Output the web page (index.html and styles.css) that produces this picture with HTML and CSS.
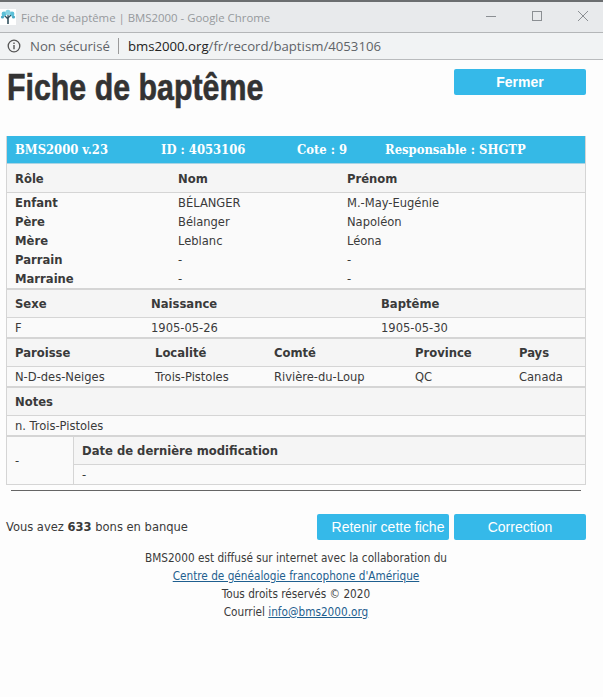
FILE: index.html
```html
<!DOCTYPE html>
<html lang="fr">
<head>
<meta charset="utf-8">
<title>Fiche de baptême | BMS2000</title>
<link rel="stylesheet" href="styles.css">
</head>
<body>
<header class="titlebar">
  <svg class="favicon" width="16" height="16" viewBox="0 0 16 16"><rect width="16" height="16" fill="#fff"/><path d="M8 15V8M8 10L4 6M8 9l4-4M8 8V3" stroke="#33505f" stroke-width="1.2" fill="none"/><circle cx="4" cy="5" r="2.4" fill="#5cc0d8"/><circle cx="12" cy="5" r="2.4" fill="#5cc0d8"/><circle cx="8" cy="3.4" r="2.6" fill="#86d3e4"/><circle cx="2.5" cy="8" r="1.6" fill="#4aa9c4"/><circle cx="13.5" cy="8" r="1.6" fill="#4aa9c4"/><path d="M8 15V8M8 10L5 7M8 9l3-3" stroke="#33505f" stroke-width="1" fill="none"/></svg>
  <span class="window-title">Fiche de baptême | BMS2000 - Google Chrome</span>
  <span class="window-controls">
    <svg width="12" height="12" viewBox="0 0 12 12"><path d="M1 6.5h10" stroke="#8b8f93" fill="none"/></svg>
    <svg width="12" height="12" viewBox="0 0 12 12"><rect x="1.5" y="1.5" width="9" height="9" stroke="#8b8f93" fill="none"/></svg>
    <svg width="12" height="12" viewBox="0 0 12 12"><path d="M1 1l10 10M11 1L1 11" stroke="#8b8f93" fill="none"/></svg>
  </span>
</header>
<div class="addressbar">
  <svg class="info" width="14" height="14" viewBox="0 0 14 14"><circle cx="7" cy="7" r="5.8" stroke="#555" stroke-width="1.3" fill="none"/><path d="M7 6v4.2" stroke="#555" stroke-width="1.4"/><path d="M7 3.4v1.5" stroke="#555" stroke-width="1.4"/></svg>
  <span class="insecure">Non sécurisé</span>
  <span class="url"><b>bms2000.org</b>/fr/record/baptism/4053106</span>
</div>
<main class="page">
  <div class="top">
    <h1>Fiche de baptême</h1>
    <a class="btn btn-bold">Fermer</a>
  </div>
  <section class="record">
    <div class="band">
      <span class="b1">BMS2000 v.23</span><span class="b2">ID : 4053106</span><span class="b3">Cote : 9</span><span>Responsable : SHGTP</span>
    </div>
    <div class="block">
      <div class="row head head-first cols-role"><span>Rôle</span><span>Nom</span><span>Prénom</span></div>
      <div class="people cols-role">
        <strong>Enfant</strong><span>BÉLANGER</span><span>M.-May-Eugénie</span>
        <strong>Père</strong><span>Bélanger</span><span>Napoléon</span>
        <strong>Mère</strong><span>Leblanc</span><span>Léona</span>
        <strong>Parrain</strong><span>-</span><span>-</span>
        <strong>Marraine</strong><span>-</span><span>-</span>
      </div>
    </div>
    <div class="block">
      <div class="row head cols-birth"><span>Sexe</span><span>Naissance</span><span>Baptême</span></div>
      <div class="row data cols-birth"><span>F</span><span>1905-05-26</span><span>1905-05-30</span></div>
    </div>
    <div class="block">
      <div class="row head cols-place"><span>Paroisse</span><span>Localité</span><span>Comté</span><span>Province</span><span>Pays</span></div>
      <div class="row data cols-place"><span>N-D-des-Neiges</span><span>Trois-Pistoles</span><span>Rivière-du-Loup</span><span>QC</span><span>Canada</span></div>
    </div>
    <div class="block">
      <div class="row head"><span>Notes</span></div>
      <div class="row data"><span>n. Trois-Pistoles</span></div>
    </div>
    <div class="block split">
      <div class="side">-</div>
      <div class="split-main">
        <div class="row head"><span>Date de dernière modification</span></div>
        <div class="row data"><span>-</span></div>
      </div>
    </div>
  </section>
  <hr class="rule">
  <div class="actions">
    <p class="credits">Vous avez <strong>633</strong> bons en banque</p>
    <a class="btn btn-offset">Retenir cette fiche</a>
    <a class="btn">Correction</a>
  </div>
  <footer class="foot">
    <div>BMS2000 est diffusé sur internet avec la collaboration du</div>
    <div><a href="#">Centre de généalogie francophone d'Amérique</a></div>
    <div>Tous droits réservés © 2020</div>
    <div>Courriel <a href="#">info@bms2000.org</a></div>
  </footer>
</main>
</body>
</html>
```
FILE: styles.css
```css
* { box-sizing: border-box; }
html, body { margin: 0; padding: 0; }
body {
  width: 603px;
  height: 697px;
  overflow: hidden;
  background: #fdfdfd;
  color: #3a3a3a;
  font-family: "DejaVu Sans Condensed", "DejaVu Sans", sans-serif;
  font-size: 12.8px;
}
.titlebar {
  height: 33px;
  display: flex;
  align-items: center;
  background: #e8eaec;
  border-top: 2px solid #6b6e70;
  border-bottom: 1px solid #b4b6b8;
}
.favicon { margin-right: 5px; }
.window-title {
  font-family: "Open Sans", sans-serif;
  font-size: 11.4px;
  color: #96999c;
}
.window-controls {
  margin-left: auto;
  display: flex;
  gap: 34px;
  padding-right: 14px;
  margin-bottom: 2px;
}
.addressbar {
  height: 27px;
  display: flex;
  align-items: center;
  background: #f1f3f4;
  border-bottom: 1px solid #b9bbbd;
  font-family: "Open Sans", sans-serif;
  font-size: 13.2px;
  color: #5f6368;
}
.info { margin: 0 9px 0 7px; }
.insecure { padding-right: 8px; border-right: 1px solid #9a9a9a; line-height: 16px; }
.url { padding-left: 9px; }
.url b { font-weight: 400; color: #222; }
.page { padding: 0 17px 0 6px; }
.top {
  height: 76px;
  display: flex;
  justify-content: space-between;
  align-items: flex-start;
}
h1 {
  margin: 6px 0 0 1px;
  font-family: "Liberation Sans", sans-serif;
  font-size: 37px;
  line-height: 44px;
  font-weight: 700;
  color: #333;
  white-space: nowrap;
  transform: scaleX(.82);
  transform-origin: left center;
  -webkit-text-stroke: .6px #333;
}
.btn {
  display: flex;
  align-items: center;
  justify-content: center;
  width: 132px;
  height: 26px;
  background: #35b9e9;
  border-radius: 2px;
  color: #fff;
  font-family: "Liberation Sans", sans-serif;
  font-size: 14px;
  white-space: nowrap;
}
.btn-bold { font-weight: 700; margin-top: 9px; }
.btn-offset { padding-left: 10px; }
.record {
  width: 580px;
  border: 1px solid #d5d5d5;
  border-top: 0;
  background: #fafafa;
}
.band {
  height: 28px;
  display: flex;
  align-items: center;
  padding-left: 8px;
  background: #35b9e6;
  border-bottom: 1px solid #a9d4e4;
  color: #fff;
  font-family: "DejaVu Serif Condensed", "DejaVu Serif", serif;
  font-weight: 700;
  font-size: 12.9px;
  white-space: nowrap;
}
.band .b1 { width: 146px; }
.band .b2 { width: 136px; }
.band .b3 { width: 88px; }
.block { border-bottom: 2px solid #d5d5d5; }
.block:last-child { border-bottom: 0; }
.row {
  display: grid;
  align-items: center;
  padding-left: 8px;
  white-space: nowrap;
}
.head {
  height: 28px;
  font-weight: 700;
  font-size: 12.9px;
  background: #f5f5f5;
  border-bottom: 1px solid #d5d5d5;
}
.head-first { height: 29px; padding-top: 1px; }
.data { height: 19px; }
.cols-role { grid-template-columns: 163px 169px 1fr; }
.cols-birth { grid-template-columns: 136px 230px 1fr; }
.cols-place { grid-template-columns: 140px 119px 141px 104px 1fr; }
.people {
  display: grid;
  grid-auto-rows: 19px;
  align-items: center;
  padding: 0 0 0 8px;
}
.people strong { font-size: 12.9px; }
.split { display: flex; }
.side {
  width: 67px;
  flex: none;
  display: flex;
  align-items: center;
  padding-left: 8px;
  border-right: 1px solid #d5d5d5;
}
.split-main { flex: 1; }
.rule {
  width: 570px;
  height: 1px;
  margin: 5px 0 0 5px;
  border: 0;
  background: #666;
}
.actions {
  display: flex;
  align-items: center;
  gap: 5px;
  margin-top: 23px;
  width: 580px;
}
.credits { margin: 0 auto 0 0; padding-bottom: 2px; }
.foot {
  width: 580px;
  margin-top: 9px;
  text-align: center;
  font-size: 11.7px;
  line-height: 18px;
}
.foot a { color: #1f5f8f; text-decoration: underline; }
```
